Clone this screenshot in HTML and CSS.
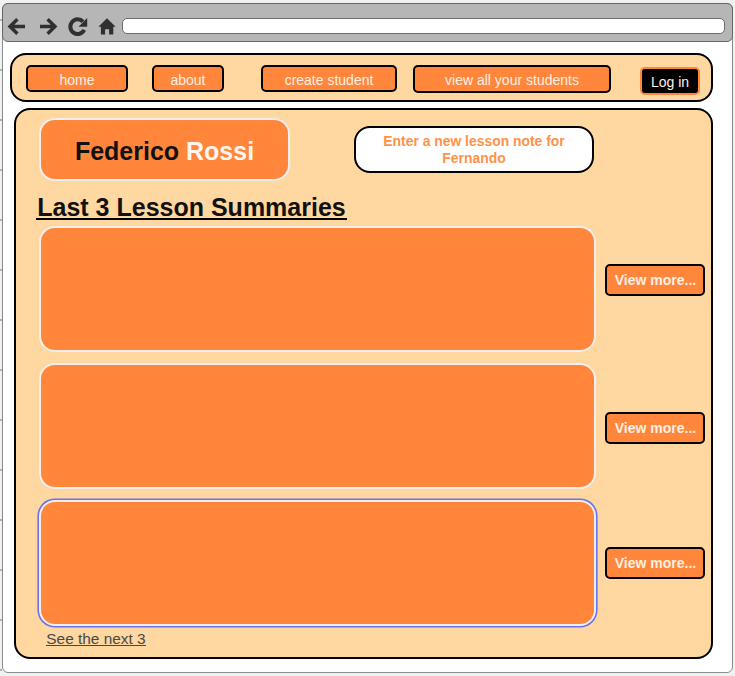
FILE: index.html
```
<!DOCTYPE html>
<html lang="en">
<head>
<meta charset="utf-8">
<title>Student lessons</title>
<link rel="stylesheet" href="styles.css">
</head>
<body>
<div class="window">
  <header class="toolbar">
    <svg class="icons" width="116" height="24" viewBox="0 0 116 24" fill="none" stroke="#303030" stroke-width="3.4">
      <path d="M23 11.5H7.5M15.4 4.3L8 11.5l7.4 7.2"/>
      <path d="M38 11.5H53M45.6 4.3L53 11.5l-7.4 7.2"/>
      <path d="M81 6.7A7.3 7.3 0 1 0 82.2 14.9" stroke-width="4"/>
      <path d="M85.2 3V11.7H76.5Z" fill="#303030" stroke="none"/>
      <path d="M105 3.2L113.6 11.8H111.3V19.4h-4.2v-5.2h-4v5.2h-4.2v-7.6h-2.5Z" fill="#303030" stroke="none"/>
    </svg>
    <div class="address"></div>
  </header>
  <nav class="nav">
    <a class="button home">home</a>
    <a class="button about">about</a>
    <a class="button create">create student</a>
    <a class="button view-all">view all your students</a>
    <a class="button login">Log in</a>
  </nav>
  <main class="panel">
    <div class="top">
      <div class="name"><span>Federico <span class="surname">Rossi</span></span></div>
      <a class="note">Enter a new lesson note for<br>Fernando</a>
    </div>
    <h1><span>Last 3 Lesson Summaries</span></h1>
    <section class="lessons">
      <div class="row"><div class="card"></div><a class="button more">View more...</a></div>
      <div class="row"><div class="card"></div><a class="button more second">View more...</a></div>
      <div class="row"><div class="card selected"></div><a class="button more third">View more...</a></div>
    </section>
    <a class="next">See the next 3</a>
  </main>
</div>
</body>
</html>
```
FILE: styles.css
```
* { box-sizing: border-box; }
body {
  margin: 0;
  height: 676px;
  padding: 3px 2px 3px 2px;
  overflow: hidden;
  font-family: "Liberation Sans", Arial, sans-serif;
  background: linear-gradient(#b4b4b4 2px, transparent 2px) 0 19px / 2px 50px repeat-y, #f0f1f3;
}
.window {
  width: 731px;
  height: 670px;
  border: 1px solid #8c8c8c;
  border-radius: 6px;
  background: #fff;
}
.toolbar {
  display: flex;
  width: 731px;
  height: 39px;
  margin: -1px 0 0 -1px;
  padding: 11px 7px 0 0;
  border: 1px solid #666;
  border-radius: 6px;
  background: #b6b6b6;
}
.icons { flex: none; margin-left: -1px; }
.address {
  width: 603px;
  height: 16px;
  margin: 3px 0 0 4px;
  border: 1px solid #6c6c6c;
  border-radius: 5px;
  background: #fff;
}
.nav {
  display: flex;
  width: 703px;
  height: 49px;
  margin: 11px 0 0 7px;
  padding: 10px 0 0 14px;
  border: 2px solid #000;
  border-radius: 16px;
  background: #ffd7a0;
}
.button {
  display: flex;
  align-items: center;
  justify-content: center;
  flex: none;
  height: 27px;
  padding-top: 2px;
  border: 2px solid #000;
  border-radius: 5px;
  background: #ff863a;
  color: #fff0e4;
  font-size: 14px;
  white-space: nowrap;
}
.home { width: 102px; }
.about { width: 72px; margin-left: 24px; }
.create { width: 136px; margin-left: 37px; }
.view-all { width: 198px; height: 28px; margin-left: 16px; padding-top: 1px; }
.login {
  width: 60px;
  height: 28px;
  margin: 2px 0 0 29px;
  border-color: #ff863a;
  background: #000;
}
.panel {
  width: 699px;
  height: 551px;
  margin: 6px 0 0 11px;
  padding: 8px 0 0 23px;
  border: 2px solid #000;
  border-radius: 16px;
  background: #ffd7a0;
}
.top { display: flex; height: 63px; }
.name, .note {
  display: flex;
  align-items: center;
  justify-content: center;
  border-radius: 16px;
  font-weight: bold;
}
.name {
  width: 251px;
  height: 63px;
  padding-top: 4px;
  border: 2px solid #f0efed;
  background: #ff863a;
  color: #111;
  font-size: 25px;
}
.surname { color: #fff6ee; }
.note {
  width: 240px;
  height: 47px;
  margin: 8px 0 0 64px;
  border: 2px solid #000;
  background: #fff;
  color: #ff9148;
  font-size: 13.9px;
  line-height: 17px;
  text-align: center;
}
h1 {
  width: 311px;
  height: 26px;
  margin: 13px 0 0 -3px;
  border-bottom: 2px solid #000;
  color: #111;
  font-size: 25px;
  line-height: 27px;
  text-align: center;
  white-space: nowrap;
}
.lessons { display: grid; gap: 11px; margin-top: 6px; }
.row { display: flex; align-items: flex-start; height: 126px; }
.card {
  width: 557px;
  height: 126px;
  border: 2px solid #f0efed;
  border-radius: 16px;
  background: #ff863a;
}
.selected { box-shadow: 0 0 0 1.6px #6c72ee; }
.more {
  width: 100px;
  height: 32px;
  margin: 38px 0 0 9px;
  padding: 0 0 0 1px;
  font-size: 14px;
  font-weight: bold;
}
.second { margin-top: 49px; }
.third { margin-top: 47px; }
.next {
  display: block;
  width: 100px;
  height: 16px;
  margin: 4px 0 0 7px;
  border-bottom: 1px solid #484848;
  color: #484848;
  font-size: 15.4px;
  line-height: 17px;
  text-align: center;
  white-space: nowrap;
}
```
